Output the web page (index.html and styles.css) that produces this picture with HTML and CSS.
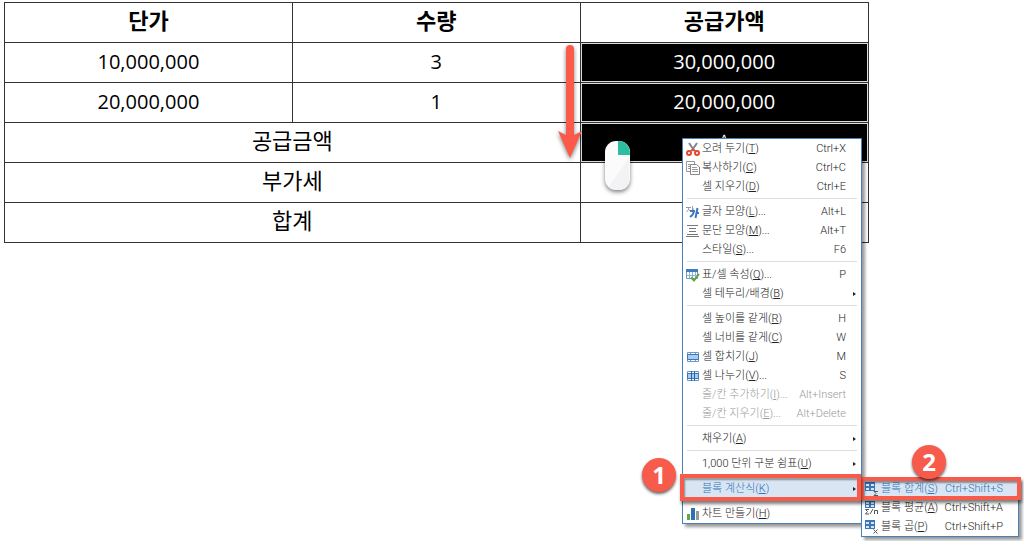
FILE: index.html
```html
<!DOCTYPE html>
<html lang="ko">
<head>
<meta charset="UTF-8">
<meta name="viewport" content="width=device-width, initial-scale=1.0">
<title>블록 계산식</title>
<link rel="stylesheet" href="styles.css">
</head>
<body>
<main class="page">
    <table class="sheet">
        <thead>
            <tr><th>단가</th><th>수량</th><th>공급가액</th></tr>
        </thead>
        <tbody>
            <tr><td class="num">10,000,000</td><td class="num">3</td><td class="num selected">30,000,000</td></tr>
            <tr><td class="num">20,000,000</td><td class="num">1</td><td class="num selected">20,000,000</td></tr>
            <tr><td colspan="2">공급금액</td><td class="selected caret">^</td></tr>
            <tr><td colspan="2">부가세</td><td></td></tr>
            <tr><td colspan="2">합계</td><td></td></tr>
        </tbody>
    </table>

    <!-- Drag direction and right click -->
    <svg class="arrow" width="28" height="118" viewBox="0 0 28 118" aria-hidden="true">
        <path d="M10 5a4 4 0 0 1 8 0V91L26 87 14 114 2 87 10 91Z" fill="#fb5a4b"/>
    </svg>
    <svg class="mouse" width="36" height="60" viewBox="0 0 36 60" aria-hidden="true">
        <rect x="5" y="3" width="25" height="49" rx="11" fill="#fbfbfc"/>
        <path d="M9 48L29 20V41Q29 52 18 52Q12 52 9 48Z" fill="#f3f3f5"/>
        <path d="M18 3C26 3 30 8 30 17H18Z" fill="#2bbf9f"/>
    </svg>

    <div class="menu">
        <button class="item">
            <svg class="icon" viewBox="0 0 14 14"><path d="M3 1L8.500 9M11 1L5.500 9" stroke="#858585" stroke-width="2"/><circle cx="3" cy="11" r="2" fill="none" stroke="#e2492f" stroke-width="2"/><circle cx="11" cy="11" r="2" fill="none" stroke="#e2492f" stroke-width="2"/><path d="M4 9.500L7 7.500 10 9.500" fill="none" stroke="#e2492f" stroke-width="1.500"/></svg>
            <span>오려 두기(<u>T</u>)</span><kbd>Ctrl+X</kbd>
        </button>
        <button class="item">
            <svg class="icon" viewBox="0 0 14 14"><path d="M.5 .5H8.500V10.500H.5Z" fill="#fff" stroke="#999"/><path d="M4.500 3.500H10.500L13.500 6V13.500H4.500Z" fill="#fff" stroke="#888"/><path d="M6 6.500H11M6 8.500H12M6 10.500H12M2 3.500H4M2 5.500H4M2 7.500H4" stroke="#999"/></svg>
            <span>복사하기(<u>C</u>)</span><kbd>Ctrl+C</kbd>
        </button>
        <button class="item"><i class="icon"></i><span>셀 지우기(<u>D</u>)</span><kbd>Ctrl+E</kbd></button>
        <hr>
        <button class="item">
            <svg class="icon" viewBox="0 0 14 14"><path d="M0 2.500H5M3 2.500Q3 5 .5 7M3 4.500L5 7M6.500 1V7M6.500 4H8" fill="none" stroke="#999"/><path d="M4 6H8Q7.500 10 4 12M11.500 3L9.500 13M10.500 8H13" fill="none" stroke="#3b78bd" stroke-width="2"/></svg>
            <span>글자 모양(<u>L</u>)...</span><kbd>Alt+L</kbd>
        </button>
        <button class="item">
            <svg class="icon" viewBox="0 0 14 14"><path d="M1 1.500H12M3 4.500H10M3 7.500H10M1 10.500H12M0 12.500H13" stroke="#777"/></svg>
            <span>문단 모양(<u>M</u>)...</span><kbd>Alt+T</kbd>
        </button>
        <button class="item"><i class="icon"></i><span>스타일(<u>S</u>)...</span><kbd>F6</kbd></button>
        <hr>
        <button class="item">
            <svg class="icon" viewBox="0 0 14 14"><path d="M.5 1.500H11.500V10.500H.5Z" fill="#fff" stroke="#6c9cc9"/><path d="M0 1H12V4H0Z" fill="#3f7dbc"/><path d="M3.500 4V10M6.500 4V10M9.500 4V10M1 7.500H11" stroke="#8eb3d8"/><path d="M5 9.500L8 12.500 13 6" fill="none" stroke="#63a83e" stroke-width="2"/></svg>
            <span>표/셀 속성(<u>Q</u>)...</span><kbd>P</kbd>
        </button>
        <button class="item more"><i class="icon"></i><span>셀 테두리/배경(<u>B</u>)</span></button>
        <hr>
        <button class="item"><i class="icon"></i><span>셀 높이를 같게(<u>R</u>)</span><kbd>H</kbd></button>
        <button class="item"><i class="icon"></i><span>셀 너비를 같게(<u>C</u>)</span><kbd>W</kbd></button>
        <button class="item">
            <svg class="icon" viewBox="0 0 14 14"><path d="M1.500 2.500H12.500V11.500H1.500Z" fill="#fff" stroke="#6a9acb"/><path d="M4.500 2V12M9.500 2V12" stroke="#6a9acb"/><path d="M1.500 4.500H12.500V9.500H1.500Z" fill="#a9cbef" stroke="#3c78b5"/></svg>
            <span>셀 합치기(<u>J</u>)</span><kbd>M</kbd>
        </button>
        <button class="item">
            <svg class="icon" viewBox="0 0 14 14"><path d="M1.500 2.500H12.500V11.500H1.500Z" fill="#fff" stroke="#6a9acb"/><path d="M1.500 4.500H12.500V9.500H1.500Z" fill="#a9cbef" stroke="#3c78b5"/><path d="M5.500 2V12M8.500 2V12" stroke="#2466ad"/></svg>
            <span>셀 나누기(<u>V</u>)...</span><kbd>S</kbd>
        </button>
        <button class="item" disabled><i class="icon"></i><span>줄/칸 추가하기(<u>I</u>)...</span><kbd>Alt+Insert</kbd></button>
        <button class="item" disabled><i class="icon"></i><span>줄/칸 지우기(<u>E</u>)...</span><kbd>Alt+Delete</kbd></button>
        <hr>
        <button class="item more"><i class="icon"></i><span>채우기(<u>A</u>)</span></button>
        <hr>
        <button class="item more"><i class="icon"></i><span>1,000 단위 구분 쉼표(<u>U</u>)</span></button>
        <hr>
        <div class="branch">
            <button class="item more active"><i class="icon"></i><span>블록 계산식(<u>K</u>)</span></button>
            <div class="menu submenu">
                <button class="item active">
                    <svg class="icon" viewBox="0 0 14 14"><path d="M0 0H10V9H0Z" fill="#3c78b5"/><path d="M1 2H4V4H1ZM6 2H9V4H6ZM1 6H4V8H1ZM6 6H9V8H6Z" fill="#d5e6f8"/><path d="M13 9.500H9L11 11.500 9 13.500H13" fill="none" stroke="#555"/></svg>
                    <span>블록 합계(<u>S</u>)</span><kbd>Ctrl+Shift+S</kbd>
                </button>
                <button class="item">
                    <svg class="icon" viewBox="0 0 14 14"><path d="M0 0H10V7H0Z" fill="#3c78b5"/><path d="M1 1H4V3H1ZM6 1H9V3H6ZM1 4H4V6H1ZM6 4H9V6H6Z" fill="#d5e6f8"/><path d="M4 8.500H.5L2.500 10.500 .5 13H4M5 13L8 8M9.500 13V9.500H12.500V13" fill="none" stroke="#555"/></svg>
                    <span>블록 평균(<u>A</u>)</span><kbd>Ctrl+Shift+A</kbd>
                </button>
                <button class="item">
                    <svg class="icon" viewBox="0 0 14 14"><path d="M0 0H10V9H0Z" fill="#3c78b5"/><path d="M1 2H4V4H1ZM6 2H9V4H6ZM1 6H4V8H1ZM6 6H9V8H6Z" fill="#d5e6f8"/><path d="M8.500 9.500L12.500 13.500M12.500 9.500L8.500 13.500" stroke="#555"/></svg>
                    <span>블록 곱(<u>P</u>)</span><kbd>Ctrl+Shift+P</kbd>
                </button>
                <div class="frame frame-sub"></div>
                <div class="badge badge-two">2</div>
            </div>
            <div class="frame frame-main"></div>
            <div class="badge badge-one">1</div>
        </div>
        <hr>
        <button class="item">
            <svg class="icon" viewBox="0 0 14 14"><path d="M1 7H4V13H1Z" fill="#62a83f"/><path d="M5 1H9V13H5Z" fill="#2c70b5"/><path d="M10 4H13V13H10Z" fill="#999"/></svg>
            <span>차트 만들기(<u>H</u>)</span>
        </button>
    </div>
</main>
</body>
</html>
```
FILE: styles.css
```css
body {
    margin: 0;
    background: #fff;
    color: #000;
    font-family: "Noto Sans CJK KR", sans-serif;
}
.page {
    position: relative;
    min-height: 100vh;
    padding: 2px 4px;
    box-sizing: border-box;
}
.sheet {
    width: calc(85% + 1px);
    table-layout: fixed;
    border-collapse: collapse;
    font-size: 22px;
    line-height: 32px;
    text-align: center;
}
.sheet th,
.sheet td {
    padding: 0 0 7px;
    border: 1px solid #333;
}
.sheet .num {
    padding-bottom: 2px;
    font-family: "Open Sans", sans-serif;
    font-size: 20px;
    line-height: 37px;
}
.sheet .selected {
    background: #000;
    color: #fff;
    box-shadow: inset 0 0 0 1px #ddd;
}
.sheet .caret {
    font-size: 14px;
    line-height: 24px;
}
.arrow,
.mouse {
    position: absolute;
    filter: drop-shadow(0 2px 2px rgba(0, 0, 0, 0.5));
}
.arrow {
    left: 556px;
    top: 44px;
}
.mouse {
    left: 600px;
    top: 138px;
}
.menu {
    position: absolute;
    left: 682px;
    top: 138px;
    width: 178px;
    border: 1px solid #4a80b8;
    background: #fff;
    box-shadow: 3px 3px 3px rgba(0, 0, 0, 0.4);
}
.menu hr {
    height: 1px;
    margin: 2px 4px 3px;
    border: 0;
    background: #ddd;
}
.item {
    display: flex;
    align-items: center;
    gap: 2px;
    position: relative;
    width: 100%;
    height: 19px;
    padding: 0 15px 0 3px;
    border: 0;
    background: none;
    color: #222;
    font-family: Roboto, "Noto Sans CJK KR", sans-serif;
    font-size: 11px;
    font-weight: 300;
    line-height: 17px;
    white-space: nowrap;
}
.item:disabled {
    color: #999;
}
.item.active {
    background: #d9e5f2;
    color: #2f74be;
}
.item kbd {
    margin-left: auto;
    font-family: inherit;
}
.icon {
    flex: none;
    width: 14px;
    height: 14px;
}
.more::after {
    content: "";
    margin-left: auto;
    margin-right: -10px;
    border: 2px solid transparent;
    border-left: 3px solid #222;
    border-right: 0;
}
.branch {
    position: relative;
}
.submenu {
    left: 100%;
    top: -1px;
    width: 156px;
}
.frame {
    position: absolute;
    border: 4px solid #f75b4c;
    box-shadow: 1px 3px 3px rgba(0, 0, 0, 0.5), inset 1px 2px 2px rgba(0, 0, 0, 0.4);
    pointer-events: none;
}
.frame-main {
    inset: -5px 0 -3px -3px;
}
.frame-sub {
    left: -2px;
    right: -3px;
    top: -2px;
    height: 15px;
}
.badge {
    position: absolute;
    width: 34px;
    height: 34px;
    border-radius: 50%;
    background: #f75b4c;
    box-shadow: 0 2px 3px rgba(0, 0, 0, 0.6);
    color: #fff;
    font: bold 24px/34px "Open Sans", sans-serif;
    text-align: center;
}
.badge-one {
    left: -41px;
    top: -21px;
}
.badge-two {
    left: 50px;
    top: -34px;
}
```
